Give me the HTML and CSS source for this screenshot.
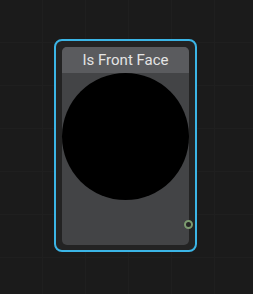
FILE: index.html
```html
<!DOCTYPE html>
<html lang="en">
<head>
  <meta charset="UTF-8">
  <title>Is Front Face</title>
  <link rel="stylesheet" href="styles.css">
</head>
<body>

  <!-- Nodo del grafo -->
  <div class="nodo">
    <div class="tarjeta">
      <div class="cabecera">Is Front Face</div>
      <div class="cuerpo">
        <div class="vista-previa"></div>
        <div class="fila-salida">
          <span class="puerto"></span>
        </div>
      </div>
    </div>
  </div>

</body>
</html>
```

FILE: styles.css
```css
body {
  margin: 0;
  padding: 39px 0 0 54px;
  height: 294px;
  box-sizing: border-box;
  font-family: 'Roboto', 'Liberation Sans', sans-serif;
  background-color: #1b1b1b;
  background-image:
    linear-gradient(to right, #1f1f1f 1px, transparent 1px),
    linear-gradient(to bottom, #1f1f1f 1px, transparent 1px);
  background-size: 43px 43px;
  background-position: -1px -1px;
  overflow: hidden;
}

.nodo {
  width: 143px;
  height: 213px;
  box-sizing: border-box;
  border: 2px solid #3bb5e6;
  border-radius: 8px;
  background-color: #232323;
  padding: 6px;
}

.tarjeta {
  width: 127px;
  height: 198px;
  border-radius: 5px;
  background-color: #434446;
  display: flex;
  flex-direction: column;
}

.cabecera {
  height: 26px;
  background-color: #5a5b5e;
  border-radius: 5px 5px 0 0;
  color: #e4e4e4;
  font-size: 15px;
  line-height: 26px;
  text-align: center;
}

.cuerpo {
  flex: 1;
  display: flex;
  flex-direction: column;
}

.vista-previa {
  width: 127px;
  height: 127px;
  border-radius: 50%;
  background-color: #000;
}

.fila-salida {
  display: flex;
  justify-content: flex-end;
  padding-top: 20px;
}

.puerto {
  width: 9px;
  height: 9px;
  box-sizing: border-box;
  border: 2px solid #7c9b6f;
  border-radius: 50%;
  background-color: #252525;
  margin-right: -4px;
}
```
